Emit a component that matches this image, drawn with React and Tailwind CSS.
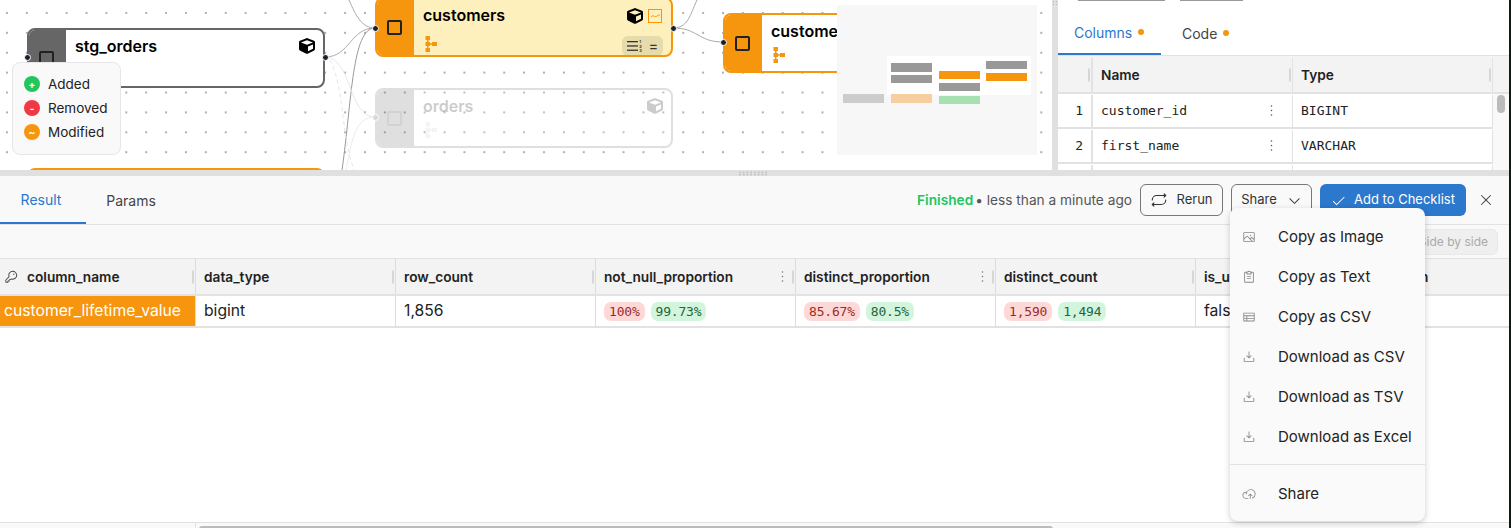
import React from "react";
import { FaCube } from "react-icons/fa";
import {
  PiImage, PiClipboardText, PiTable, PiDownloadSimple, PiCloudArrowUp,
  PiRepeat, PiCheck, PiX, PiCaretDown, PiKey, PiDotsThreeVertical,
} from "react-icons/pi";

const Tree = ({ className = "", style }) => (
  <svg viewBox="0 0 12 16" width="12" height="16" className={className} style={style} fill="currentColor">
    <rect x="0.5" y="0" width="4.5" height="4" />
    <rect x="0.5" y="6" width="4.5" height="4" />
    <rect x="0.5" y="12" width="4.5" height="4" />
    <rect x="7" y="6" width="5" height="4" />
    <rect x="2" y="3" width="1.5" height="10" />
    <rect x="4" y="7.2" width="4" height="1.5" />
  </svg>
);

const Handle = ({ x, y, faded }) => (
  <div
    className={`absolute w-[7px] h-[7px] rounded-full border border-white ${faded ? "bg-[#d8d8d8]" : "bg-[#1a202c]"}`}
    style={{ left: x - 3.5, top: y - 3.5 }}
  />
);

function Node({ x, y, w = 298, h = 60, title, color = "border-[#f6950e]", strip = "bg-[#f6950e]", body = "bg-white", cube, cubeTop = 8, faded, children, tree, treeGap = 5 }) {
  return (
    <div
      className={`absolute flex rounded-lg border-2 overflow-hidden ${color} ${body} ${faded ? "opacity-20" : ""}`}
      style={{ left: x, top: y, width: w, height: h }}
    >
      <div className={`w-[37px] shrink-0 flex items-center justify-center pr-[2px] ${strip}`}>
        <div className="w-[15px] h-[15px] border-2 border-[#222] rounded-[2px]" />
      </div>
      <div className="relative flex-1 pl-[8px] pt-[6px]">
        <div className="ml-[1px] text-[16px] leading-5 font-semibold text-black">{title}</div>
        {tree && <Tree className={`ml-[3px] ${faded ? "text-[#ccc]" : "text-[#f6950e]"}`} style={{ marginTop: treeGap + 1 }} />}
        {cube && <FaCube className="absolute text-[16px] text-black" style={{ right: cube, top: cubeTop }} />}
        {children}
      </div>
    </div>
  );
}

const Legend = ({ bg, sign, label }) => (
  <div className="flex items-center gap-2 h-6">
    <span className={`w-4 h-4 rounded-full ${bg} flex items-center justify-center text-white text-[10px] font-bold leading-none`}>{sign}</span>
    <span className="text-[13.5px] text-[#222]">{label}</span>
  </div>
);

const Mini = ({ x, y, c, h = 9 }) => (
  <div className={`absolute w-[41px] ${c}`} style={{ left: x, top: y, height: h }} />
);

const Resize = () => <span className="absolute right-[1px] top-1/2 -translate-y-1/2 w-[2px] h-[13px] bg-[#d6d6d6]" />;

function Head({ children, kebab, icon }) {
  return (
    <div className="relative flex items-center gap-[9px] pl-2 pt-[1px] border-r border-[#ddd] text-[13.7px] font-semibold text-[#222] min-w-0">
      {icon}
      <span>{children}</span>
      {kebab && <PiDotsThreeVertical className="absolute right-[4px] top-[9px] text-[17px] text-[#777]" />}
      <Resize />
    </div>
  );
}

const Badge = ({ red, children }) => (
  <span className={`h-[19px] px-[5px] rounded-[7px] text-[13px] leading-[19px] font-['DejaVu_Sans_Mono',monospace] tracking-[-0.2px] ${red ? "bg-[#fed7d7] text-[#9b2c2c]" : "bg-[#d3f5de] text-[#22663a]"}`}>
    {children}
  </span>
);

const Diff = ({ a, b }) => (
  <div className="flex items-center gap-[6px] pl-2 border-r border-[#ddd]">
    <Badge red>{a}</Badge>
    <Badge>{b}</Badge>
  </div>
);

const Item = ({ icon: Icon, children }) => (
  <div className="h-10 flex items-center pl-[12px] gap-[24px] text-[15px] text-[#222]">
    <span className="w-[14px] flex justify-center text-[#888] text-[14px]"><Icon /></span>
    <span className="ml-[-2px]">{children}</span>
  </div>
);

function SchemaRow({ n, name, type }) {
  return (
    <div className="grid grid-cols-[35px_200px_200px] h-[35px] pt-[1px] border-b-2 border-[#e2e2e2] bg-white font-['DejaVu_Sans_Mono',monospace] text-[13px] text-[#222]">
      <div className="flex items-center justify-end pr-2 border-r-2 border-[#e2e2e2]">{n}</div>
      <div className="relative flex items-center pl-2 border-r border-[#e2e2e2]">
        {name}
        {name && <PiDotsThreeVertical className="absolute right-[12px] top-[7px] text-[17px] text-[#555]" />}
      </div>
      <div className="flex items-center pl-2 border-r border-[#e2e2e2]">{type}</div>
    </div>
  );
}

export default function App() {
  return (
    <div className="w-[1511px] h-[528px] overflow-hidden flex bg-[#0f1a14] font-['Inter',sans-serif]">
      <div className="w-[1509px] h-full flex flex-col bg-white">
        {/* top */}
        <div className="h-[170px] flex shrink-0">
          {/* canvas */}
          <div className="relative w-[1052px] overflow-hidden bg-white bg-[radial-gradient(circle,#b0b0b0_0.75px,transparent_1.1px)] bg-[size:19.9px_19.9px] bg-[position:-3px_3px]">
            <svg className="absolute inset-0" width="1052" height="170" fill="none">
              <path d="M349 0 C356 16 362 28 375 28" stroke="#aaa" />
              <path d="M325 57 C350 57 350 28 375 28" stroke="#aaa" />
              <path d="M342 170 C352 100 352 28 375 28" stroke="#999" />
              <path d="M325 57 C352 57 348 117 375 117" stroke="#e8e8e8" />
              <path d="M346 170 C352 140 355 117 375 117" stroke="#ececec" />
              <path d="M330 60 C345 90 340 130 354 170" stroke="#dcebe6" strokeDasharray="4 3" />
              <path d="M673 28 C688 28 690 15 697 0" stroke="#aaa" />
              <path d="M673 28 C698 28 698 42 723 42" stroke="#aaa" />
            </svg>
            <Node x={27} y={28} title="stg_orders" color="border-[#666]" strip="bg-[#666]" cube={8} tree />
            <Node x={375} y={-3} title="customers" body="bg-[#fef0bd]" cube={28} cubeTop={9} tree treeGap={10}>
              <div className="absolute right-[9px] top-[10px] w-[14px] h-[14px] border border-[#f6950e] flex items-center justify-center">
                <svg viewBox="0 0 10 6" width="10" height="6" fill="none" stroke="#f6950e" strokeWidth="1"><path d="M1 4 C3 1 5 5 7 3 C8 2 9 2 10 2" /></svg>
              </div>
              <div className="absolute right-[8px] top-[37px] w-[41px] h-[20px] rounded-md bg-[#e6dcab] flex items-center justify-center gap-[6px]">
                <svg viewBox="0 0 16 12" width="16" height="12" fill="#333">
                  <rect x="0" y="1" width="11" height="1.3" /><rect x="0" y="5.3" width="11" height="1.3" /><rect x="0" y="9.6" width="11" height="1.3" />
                  <text x="12.2" y="3.4" fontSize="4" fontWeight="700">1</text><text x="12.2" y="7.7" fontSize="4" fontWeight="700">2</text><text x="12.2" y="12" fontSize="4" fontWeight="700">3</text>
                </svg>
                <span className="text-[14px] leading-none font-medium text-[#333]">=</span>
              </div>
            </Node>
            <Node x={723} y={13} title="customers_v2" tree />
            <Node x={375} y={88} title="orders" color="border-[#666]" strip="bg-[#666]" cube={8} faded tree />
            <Node x={27} y={168} title="" />
            <Handle x={27} y={57} /><Handle x={325} y={57} /><Handle x={375} y={28} />
            <Handle x={673} y={28} /><Handle x={723} y={42} /><Handle x={375} y={117} faded />
            {/* legend */}
            <div className="absolute left-[12px] top-[62px] w-[109px] h-[93px] rounded-lg border border-[#e6e6e6] bg-[#f9f9f9] pl-[11px] pt-[9px]">
              <Legend bg="bg-[#22c55e]" sign="+" label="Added" />
              <Legend bg="bg-[#ef3a44]" sign="-" label="Removed" />
              <Legend bg="bg-[#f6950e]" sign="~" label="Modified" />
            </div>
            {/* minimap */}
            <div className="absolute left-[837px] top-[5px] w-[200px] h-[150px] bg-[#f7f7f7]">
              <div className="absolute left-[50px] top-[51px] w-[144px] h-[39px] bg-white" />
              <Mini x={6} y={89} c="bg-[#cccccc]" />
              <Mini x={54} y={89} c="bg-[#f5cfa0]" />
              <Mini x={54} y={58} c="bg-[#999]" />
              <Mini x={54} y={70} c="bg-[#999]" h={8} />
              <Mini x={102} y={66} c="bg-[#f6950e]" h={8} />
              <Mini x={102} y={78} c="bg-[#999]" h={8} />
              <Mini x={102} y={91} c="bg-[#a7e0b3]" h={8} />
              <Mini x={149} y={56} c="bg-[#999]" h={8} />
              <Mini x={149} y={68} c="bg-[#f6950e]" h={8} />
            </div>
          </div>
          {/* vertical divider */}
          <div className="w-[6px] bg-[#e0e0e0] shrink-0">
            <div className="h-[5px] bg-[radial-gradient(circle,#b5b5b5_0.7px,transparent_1px)] bg-[size:3px_3px]" />
          </div>
          {/* right panel */}
          <div className="relative flex-1 flex flex-col overflow-hidden">
            <div className="absolute left-[20px] top-0 w-[87px] h-[1px] bg-[#999]" />
            <div className="absolute left-[122px] top-0 w-[63px] h-[1px] bg-[#999]" />
            <div className="h-[56px] shrink-0 flex items-stretch border-b border-[#e2e2e2] text-[14px]">
              <div className="w-[103px] h-[55px] pt-[11px] border-b-2 border-[#2b78cc] flex items-center pl-4 gap-[6px] text-[#2b78cc]">
                Columns <span className="w-[6px] h-[6px] rounded-full bg-[#f6950e]" />
              </div>
              <div className="flex items-center pt-[11px] pl-[21px] gap-[6px] text-[#444] h-[55px]">
                Code <span className="w-[6px] h-[6px] rounded-full bg-[#f6950e]" />
              </div>
            </div>
            <div className="grid grid-cols-[35px_200px_200px_1fr] h-[38px] shrink-0 pt-[2px] border-b-2 border-[#e2e2e2] bg-[#f3f3f3] text-[13.7px] font-semibold text-[#222]">
              <div className="relative border-r-2 border-[#e2e2e2]"><Resize /></div>
              <div className="relative flex items-center pl-2 border-r border-[#e2e2e2]">Name<Resize /></div>
              <div className="relative flex items-center pl-2 border-r border-[#e2e2e2]">Type<Resize /></div>
              <div />
            </div>
            <div className="relative flex-1 overflow-hidden">
              <SchemaRow n="1" name="customer_id" type="BIGINT" />
              <SchemaRow n="2" name="first_name" type="VARCHAR" />
              <SchemaRow n="" name="" type="" />
              <div className="absolute right-0 top-0 bottom-0 w-[16px] bg-[#f9f9f9]">
                <div className="absolute left-[4px] top-[1px] w-2 h-[18px] rounded bg-[#bbb]" />
              </div>
            </div>
          </div>
        </div>
        {/* horizontal divider */}
        <div className="h-[6px] shrink-0 bg-[#e0e0e0] flex justify-center">
          <div className="ml-[-3px] w-[30px] h-[5px] mt-[1px] bg-[radial-gradient(circle,#b5b5b5_0.7px,transparent_1px)] bg-[size:3.75px_2.5px]" />
        </div>
        {/* bottom panel */}
        <div className="relative flex-1 flex flex-col bg-[#f9f9f9]">
          <div className="h-[49px] shrink-0 flex items-center border-b border-[#e2e2e2] text-[14px]">
            <div className="w-[86px] h-[48px] flex items-center justify-center pr-1 border-b-2 border-[#2b78cc] text-[#2b78cc]">Result</div>
            <div className="w-[90px] flex justify-center text-[#444]">Params</div>
            <div className="flex-1 flex items-center justify-end pr-[15px] text-[13.7px] h-full">
              <span className="font-semibold text-[#22c55e]">Finished</span>
              <span className="ml-[2px] text-[#555]">•&nbsp;less than a minute ago</span>
              <button className="ml-2 w-[83px] h-[32px] rounded-md border border-[#777] flex items-center justify-center gap-2 text-[13px] text-[#333]">
                <PiRepeat className="text-[18px]" />Rerun
              </button>
              <button className="ml-2 w-[81px] h-[32px] rounded-md border border-[#777] flex items-center justify-center gap-[10px] text-[13px] text-[#333]">
                Share<PiCaretDown className="text-[15px]" />
              </button>
              <button className="ml-2 w-[146px] h-[32px] rounded-md bg-[#2b78cc] flex items-center justify-center gap-2 text-[13px] text-white">
                <PiCheck className="text-[15px]" />Add to Checklist
              </button>
              <PiX className="ml-[12px] text-[16px] text-[#444]" />
            </div>
          </div>
          <div className="h-[34px] shrink-0 flex items-center justify-end pr-[11px] border-b border-[#e2e2e2]">
            <div className="w-[90px] h-[26px] rounded-md bg-[#efefef] border border-[#e8e8e8] flex items-center justify-end pr-[9px] text-[12px] text-[#aaa]">Side by side</div>
          </div>
          <div className="grid grid-cols-[196px_repeat(6,200px)_1fr] h-[37px] shrink-0 border-b-2 border-[#e2e2e2] bg-[#f3f3f3]">
            <Head icon={<PiKey className="ml-[-4px] text-[14px] text-[#444]" />}>column_name</Head>
            <Head>data_type</Head>
            <Head>row_count</Head>
            <Head kebab>not_null_proportion</Head>
            <Head kebab>distinct_proportion</Head>
            <Head>distinct_count</Head>
            <Head>is_unique</Head>
            <div className="flex items-center pl-2 pt-[1px] text-[13.7px] font-semibold text-[#222]">min</div>
          </div>
          <div className="grid grid-cols-[196px_repeat(6,200px)_1fr] h-[32px] shrink-0 border-b-2 border-[#e2e2e2] bg-white text-[15.7px] text-[#222]">
            <div className="flex items-center pl-1 bg-[#f6950e] text-white border-r border-[#ddd]">customer_lifetime_value</div>
            <div className="flex items-center pl-2 border-r border-[#ddd]">bigint</div>
            <div className="flex items-center pl-2 border-r border-[#ddd]">1,856</div>
            <Diff a="100%" b="99.73%" />
            <Diff a="85.67%" b="80.5%" />
            <Diff a="1,590" b="1,494" />
            <div className="flex items-center pl-2 border-r border-[#ddd]">false</div>
            <div />
          </div>
          <div className="flex-1 bg-white" />
          <div className="relative h-[6px] shrink-0 border-t border-[#e2e2e2] bg-[#f9f9f9]">
            <div className="h-full w-[196px] border-r border-[#e2e2e2]" />
            <div className="absolute left-[199px] top-[3px] w-[854px] h-[3px] rounded-t bg-[#bbb]" />
          </div>
          {/* menu */}
          <div className="absolute left-[1230px] top-[32px] w-[195px] h-[313px] rounded-lg bg-[#fafafa] shadow-[0_2px_6px_rgba(0,0,0,0.2)]">
            <div className="pt-[9px]">
              <Item icon={PiImage}>Copy as Image</Item>
              <Item icon={PiClipboardText}>Copy as Text</Item>
              <Item icon={PiTable}>Copy as CSV</Item>
              <Item icon={PiDownloadSimple}>Download as CSV</Item>
              <Item icon={PiDownloadSimple}>Download as TSV</Item>
              <Item icon={PiDownloadSimple}>Download as Excel</Item>
            </div>
            <div className="mt-[7px] border-t border-[#e2e2e2]" />
            <div className="mt-[9px]"><Item icon={PiCloudArrowUp}>Share</Item></div>
          </div>
        </div>
      </div>
    </div>
  );
}
